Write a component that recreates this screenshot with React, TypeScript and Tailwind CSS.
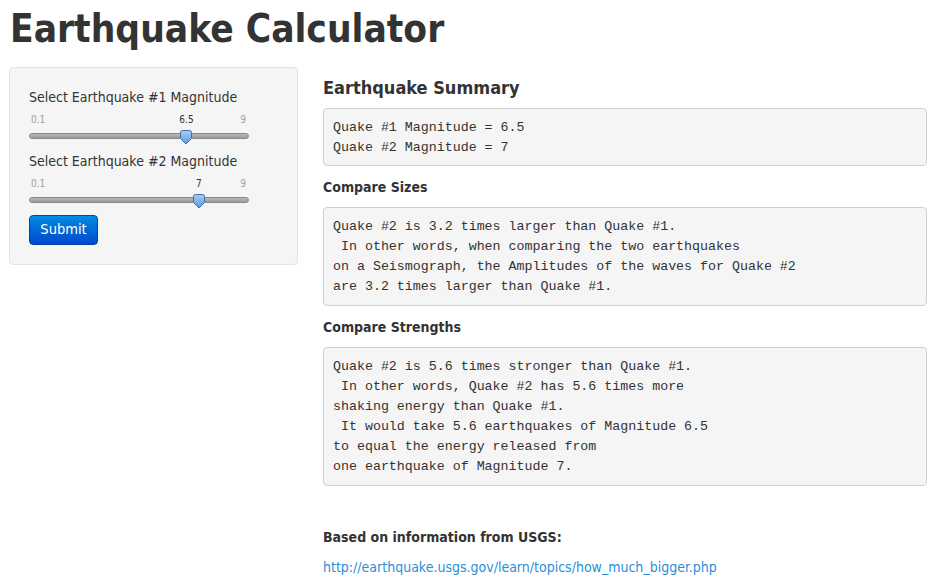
import React from "react";

const sans = { fontFamily: '"DejaVu Sans Condensed", "DejaVu Sans", sans-serif' };
const mono = { fontFamily: '"Liberation Mono", "Courier New", monospace' };

function Slider({ value, min, max }: { value: number; min: number; max: number }) {
  const frac = (value - min) / (max - min);
  return (
    <div className="relative h-[37px] w-[220px]">
      <span className="absolute left-[2px] top-[0px] text-[10px] leading-[12px] text-[#a0a0a0]">{min}</span>
      <span className="absolute right-[3px] top-[0px] text-[10px] leading-[12px] text-[#a0a0a0]">{max}</span>
      <span
        className="absolute top-[0px] -translate-x-1/2 text-[10px] leading-[12px] text-[#333]"
        style={{ left: `${frac * 219}px` }}
      >
        {value}
      </span>
      <div className="absolute left-0 top-[19px] h-[6px] w-[220px] rounded-[3px] border border-[#8a8a8a] bg-gradient-to-b from-[#b8b8b8] to-[#9a9a9a]" />
      <svg
        className="absolute top-[16px]"
        style={{ left: `${frac * 219 - 7}px` }}
        width="14"
        height="15"
        viewBox="0 0 14 15"
      >
        <defs>
          <linearGradient id={`g${value}`} x1="0" y1="0" x2="0" y2="1">
            <stop offset="0" stopColor="#a9cdf3" />
            <stop offset="1" stopColor="#5a9be0" />
          </linearGradient>
        </defs>
        <path d="M1.5 2.5 Q1.5 0.5 3.5 0.5 H10.5 Q12.5 0.5 12.5 2.5 V8.5 L7 14 L1.5 8.5 Z" fill={`url(#g${value})`} stroke="#3f6fa8" strokeWidth="1" />
      </svg>
    </div>
  );
}

export default function App() {
  return (
    <div className="min-h-[586px] w-[932px] bg-white text-[#333]" style={sans}>
      <h1 className="pl-[10px] pt-[5px] text-[38.5px] font-bold leading-[47px] text-[#333]">Earthquake Calculator</h1>
      <div className="mt-[15px] flex items-start">
        <div className="ml-[9px] w-[289px] rounded-[4px] border border-[#e3e3e3] bg-[#f5f5f5] px-[19px] pb-[19px] pt-[19px]">
          <div className="text-[14px] leading-[20px] text-[#333]">Select Earthquake #1 Magnitude</div>
          <div className="mt-[7px]">
            <Slider value={6.5} min={0.1} max={9} />
          </div>
          <div className="text-[14px] leading-[20px] text-[#333]">Select Earthquake #2 Magnitude</div>
          <div className="mt-[7px]">
            <Slider value={7} min={0.1} max={9} />
          </div>
          <button className="block h-[30px] w-[69px] rounded-[4px] border border-[#0044aa] bg-gradient-to-b from-[#0a8ae0] to-[#0046cc] text-[14.5px] text-white">
            Submit
          </button>
        </div>
        <div className="ml-[25px] w-[604px]">
          <h3 className="mt-[8px] text-[18px] font-bold leading-[26px] text-[#333]">Earthquake Summary</h3>
          <pre className="mt-[7px] rounded-[4px] border border-[#cfcfcf] bg-[#f5f5f5] pb-[7px] pl-[9px] pt-[9px] text-[13.3px] leading-[20px] text-[#333]" style={mono}>
{`Quake #1 Magnitude = 6.5
Quake #2 Magnitude = 7`}
          </pre>
          <h4 className="mt-[11px] text-[14px] font-bold leading-[20px]">Compare Sizes</h4>
          <pre className="mt-[10px] rounded-[4px] border border-[#cfcfcf] bg-[#f5f5f5] pb-[8px] pl-[9px] pt-[9px] text-[13.3px] leading-[20px] text-[#333]" style={mono}>
{`Quake #2 is 3.2 times larger than Quake #1.
 In other words, when comparing the two earthquakes
on a Seismograph, the Amplitudes of the waves for Quake #2
are 3.2 times larger than Quake #1.`}
          </pre>
          <h4 className="mt-[11px] text-[14px] font-bold leading-[20px]">Compare Strengths</h4>
          <pre className="mt-[10px] rounded-[4px] border border-[#cfcfcf] bg-[#f5f5f5] pb-[8px] pl-[9px] pt-[9px] text-[13.3px] leading-[20px] text-[#333]" style={mono}>
{`Quake #2 is 5.6 times stronger than Quake #1.
 In other words, Quake #2 has 5.6 times more
shaking energy than Quake #1.
 It would take 5.6 earthquakes of Magnitude 6.5
to equal the energy released from
one earthquake of Magnitude 7.`}
          </pre>
          <h4 className="mt-[41px] text-[14px] font-bold leading-[20px]">Based on information from USGS:</h4>
          <a href="#" className="mt-[10px] block text-[14px] leading-[20px] text-[#2a8fd8]">
            http://earthquake.usgs.gov/learn/topics/how_much_bigger.php
          </a>
        </div>
      </div>
    </div>
  );
}
